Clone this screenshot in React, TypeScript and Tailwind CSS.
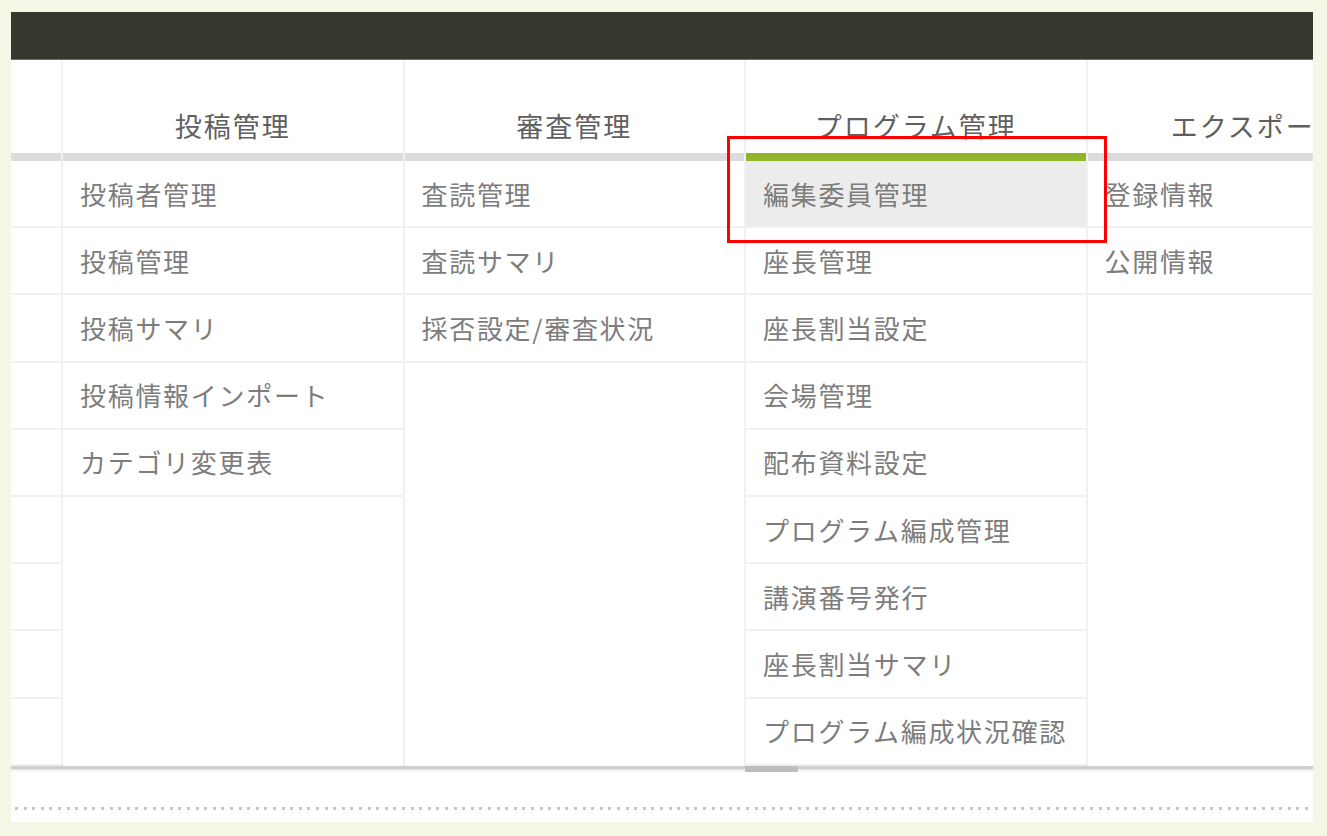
import React from "react";

type Col = {
  title: string;
  items: string[];
  active?: number;
};

const columns: Col[] = [
  { title: "投稿管理", items: ["投稿者管理", "投稿管理", "投稿サマリ", "投稿情報インポート", "カテゴリ変更表"] },
  { title: "審査管理", items: ["査読管理", "査読サマリ", "採否設定/審査状況"] },
  {
    title: "プログラム管理",
    active: 0,
    items: [
      "編集委員管理",
      "座長管理",
      "座長割当設定",
      "会場管理",
      "配布資料設定",
      "プログラム編成管理",
      "講演番号発行",
      "座長割当サマリ",
      "プログラム編成状況確認",
    ],
  },
  { title: "エクスポート", items: ["登録情報", "公開情報"] },
];

const font = { fontFamily: '"Noto Sans CJK JP", "Noto Sans", sans-serif' };

export default function App() {
  return (
    <div className="w-[1327px] h-[836px] bg-[#f3f8e6] pt-[12px] pl-[11px] overflow-hidden" style={font}>
      <div className="relative w-[1302px] h-[810px] bg-white flex flex-col">
        <div className="h-[48px] bg-[#363830] border-b border-[#6b6d66]"></div>

        <div className="flex h-[706px] overflow-hidden">
          {/* cut-off left column */}
          <div className="w-[50px] shrink-0 flex flex-col">
            <div className="h-[93px]"></div>
            <div className="h-[8px] bg-[#dcdcdc]"></div>
            {Array.from({ length: 9 }).map((_, i) => (
              <div key={i} className="h-[67.2px] border-b-2 border-[#f1f1f1]"></div>
            ))}
          </div>

          {columns.map((col) => (
            <div key={col.title} className="w-[341.5px] shrink-0 flex flex-col border-l-2 border-[#f1f1f1]">
              <div className="h-[93px] flex items-end justify-center pb-[14px]">
                <span className="text-[27px] leading-none tracking-[2px] text-[#5f5f5f] whitespace-nowrap">
                  {col.title}
                </span>
              </div>
              <div className={col.active !== undefined ? "h-[8px] bg-[#8fb52a]" : "h-[8px] bg-[#dcdcdc]"}></div>
              {col.items.map((item, i) => (
                <div
                  key={item}
                  className={`h-[67.2px] flex items-center pl-[17px] border-b-2 border-[#f1f1f1] ${
                    col.active === i ? "bg-[#ececec]" : ""
                  }`}
                >
                  <span className="text-[26px] leading-none tracking-[1.7px] text-[#7d7d7d] whitespace-nowrap">
                    {item}
                  </span>
                </div>
              ))}
            </div>
          ))}
        </div>

        <div className="h-[3px] bg-[#cfcfcf] shadow-[0_1px_3px_rgba(0,0,0,0.15)] flex">
          <div className="ml-[734px] w-[53px] h-[6px] bg-[#bdbdbd]"></div>
        </div>

        <div className="mt-[38px] mx-[4px] h-[3px] bg-[repeating-linear-gradient(90deg,#c8c8c8_0_3px,transparent_3px_8.6px)]"></div>

        {/* annotation box */}
        <div className="absolute left-[716px] top-[124px] w-[380px] h-[107px] border-[3px] border-[#ff0000]"></div>
      </div>
    </div>
  );
}
